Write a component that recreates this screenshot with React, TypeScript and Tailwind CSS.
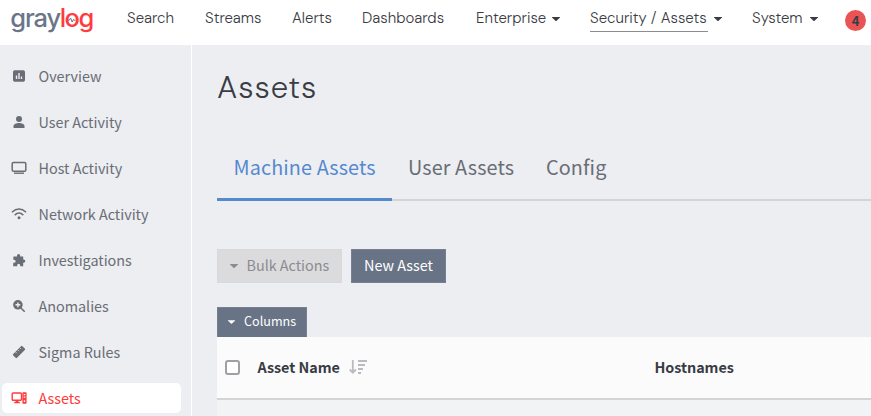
import type { ReactNode } from "react";

const sans = "font-['Source_Sans_Pro','Noto_Sans_CJK_SC',sans-serif]";
const display = "font-['DM_Sans','Inter',sans-serif]";

function Caret({ className = "" }: { className?: string }) {
  return (
    <svg viewBox="0 0 8 4" className={`block h-1 w-2 shrink-0 fill-current ${className}`}>
      <path d="M0 0H8V.6L4.600 3.800Q4 4.200 3.400 3.800L0 .6Z" />
    </svg>
  );
}

function Logo() {
  return (
    <svg viewBox="0 0 84 36" className="h-9 w-[84px] shrink-0 overflow-visible font-['Inter',sans-serif]" fontSize="25.500" fontWeight="500">
      <text x="-0.800" y="22" textLength="51" fill="#6b7588">gray</text>
      <text x="48.700" y="22" textLength="34.500" fill="#ff3b3f">log</text>
      <path d="M56.300 15.200h2l1.300-2.200 1.600 4 1.300-2.700.6.900h1.400" fill="none" stroke="#6b7588" strokeWidth="1" />
    </svg>
  );
}

function NavItem({ label, box, caret, active }: { label: string; box: string; caret?: boolean; active?: boolean }) {
  return (
    <div className="flex items-center">
      <span className={`${box} block h-[28px] whitespace-nowrap border-b pt-[4px] leading-[20px] ${active ? "border-[#8b8d92]" : "border-transparent"}`}>
        {label}
      </span>
      {caret && <Caret className="ml-[6px] mt-[2px]" />}
    </div>
  );
}

const icons: Record<string, ReactNode> = {
  overview: (
    <path fillRule="evenodd" d="M3.600 2.300h8.800a1.600 1.600 0 0 1 1.600 1.600v8.200a1.600 1.600 0 0 1-1.600 1.600H3.600A1.600 1.600 0 0 1 2 12.100V3.900a1.600 1.600 0 0 1 1.600-1.600ZM4.800 7.500v3.500h1.400V7.500ZM7.300 5v6h1.400V5ZM9.800 8.500V11h1.400V8.500Z" />
  ),
  user: (
    <>
      <circle cx="8" cy="5" r="3" />
      <path d="M2.500 14v-1.800C2.500 10.200 5.500 9 8 9s5.500 1.200 5.500 3.200V14Z" />
    </>
  ),
  host: (
    <>
      <rect x="1.200" y="2.500" width="13.600" height="8.800" rx="1.200" fill="none" stroke="currentColor" strokeWidth="1.500" />
      <path d="M3 12.500h10v1.400H3Z" />
    </>
  ),
  network: (
    <>
      <path d="M.9 6.300Q8-.2 15.100 6.300M3.700 9.100Q8 5 12.300 9.100" fill="none" stroke="currentColor" strokeWidth="1.500" />
      <circle cx="8" cy="11.800" r="1.500" />
    </>
  ),
  puzzle: (
    <path d="M2.500 4.500H6V3.600a1.600 1.600 0 0 1 3.200 0v.9h3v3h.5a1.600 1.600 0 0 1 0 3.200h-.5v3.600H9.200v-1a1.500 1.500 0 0 0-3 0v1H2.200v-3.500h.9a1.500 1.500 0 0 0 0-3h-.9Z" />
  ),
  zoom: (
    <>
      <path fillRule="evenodd" d="M6.900 2a4.800 4.800 0 1 0 0 9.600A4.800 4.800 0 0 0 6.900 2ZM6.200 4.400h1.400v1.700h1.700v1.400H7.600v1.700H6.200V7.500H4.500V6.100h1.700Z" />
      <path d="m9.700 9.700 4 4" stroke="currentColor" strokeWidth="1.600" />
    </>
  ),
  ruler: (
    <>
      <rect x="1.500" y="5.300" width="13" height="5.400" rx="1" transform="rotate(-45 8 8)" />
      <path d="m4.300 7.700 1.500 1.500M6.400 5.600l1.500 1.500M8.500 3.500 10 5" stroke="#edeef2" strokeWidth=".7" />
    </>
  ),
  assets: (
    <>
      <rect x="1.200" y="3" width="9.300" height="7.300" rx="1" fill="none" stroke="currentColor" strokeWidth="1.400" />
      <path d="M4.500 10.500h3v1.500h1.300v1.300H3.200V12h1.300Z" />
      <path fillRule="evenodd" d="M12.100 2.300h2.800a.7.700 0 0 1 .7.700v10a.7.700 0 0 1-.7.700h-2.800a.7.700 0 0 1-.7-.7V3a.7.700 0 0 1 .7-.7ZM12.700 4v1.200h1.600V4ZM12.700 6.500v1.200h1.600V6.500ZM13.500 10.200a.8.800 0 1 0 .01 0Z" />
    </>
  ),
};

const sideItems = [
  { icon: "overview", label: "Overview" },
  { icon: "user", label: "User Activity" },
  { icon: "host", label: "Host Activity" },
  { icon: "network", label: "Network Activity" },
  { icon: "puzzle", label: "Investigations" },
  { icon: "zoom", label: "Anomalies" },
  { icon: "ruler", label: "Sigma Rules" },
  { icon: "assets", label: "Assets", active: true },
];

export default function App() {
  return (
    <div className={`flex h-[416px] w-[871px] flex-col overflow-hidden bg-[#edeef2] ${sans}`}>
      <header className={`flex h-[45px] shrink-0 bg-white pl-[11px] text-[15px] font-light text-[#3a3c44] ${display}`}>
        <div className="w-[116px] pt-[5px]"><Logo /></div>
        <nav className="flex h-[36px] items-center">
          <NavItem label="Search" box="mr-[30px] w-[48px]" />
          <NavItem label="Streams" box="mr-[30px] w-[57px]" />
          <NavItem label="Alerts" box="mr-[30px] w-[40px]" />
          <NavItem label="Dashboards" box="w-[84px]" />
          <div className="w-[30px]" />
          <NavItem label="Enterprise" box="w-[70px]" caret />
          <div className="w-[30px]" />
          <NavItem label="Security / Assets" box="w-[118px]" caret active />
          <div className="w-[30px]" />
          <NavItem label="System" box="w-[52px]" caret />
        </nav>
        <div className="ml-[27px] mt-[10px] flex size-[21px] items-center justify-center rounded-full bg-[#eb5454] pb-px font-['Noto_Sans_CJK_SC',sans-serif] text-[13px] leading-none font-bold text-[#3a3c44]">4</div>
      </header>

      <div className="flex min-h-0 flex-1">
        <aside className="w-[192px] shrink-0 border-r border-white pl-[2px] pt-[16px]">
          {sideItems.map((item) => (
            <div
              key={item.label}
              className={`mb-[16px] flex h-[30px] w-[179px] items-center rounded-[5px] pl-[9px] text-[14.400px] leading-[20px] tracking-[-0.020px] ${item.active ? "bg-white text-[#ff3b3b]" : "text-[#696d75]"}`}
            >
              <svg viewBox="0 0 16 16" className="size-4 shrink-0 fill-current">{icons[item.icon]}</svg>
              <span className="ml-[11.500px] whitespace-nowrap">{item.label}</span>
            </div>
          ))}
        </aside>

        <main className="flex min-w-0 flex-1 flex-col pl-[25px]">
          <h1 className={`mt-[23px] h-[39px] text-[31px] leading-[40px] font-light tracking-[0.900px] text-[#3a3c44] ${display}`}>Assets</h1>
          <div className="mt-[35px] flex h-[59px] shrink-0 items-stretch text-[19.800px] leading-[28px] tracking-[0.120px] text-[#696d75] shadow-[inset_0_-2px_0_#d3d4d7]">
            <div className="w-[175px] border-b-[3px] border-[#5589cf] pl-[16.500px] pt-[11px] whitespace-nowrap text-[#5589cf]">Machine Assets</div>
            <div className="w-[138px] pl-[16px] pt-[11px] whitespace-nowrap">User Assets</div>
            <div className="pl-[16px] pt-[11px]">Config</div>
          </div>
          <div className="mt-[48px] flex gap-[9px] text-[14.400px] leading-[20px] tracking-[-0.030px]">
            <div className="flex h-[34px] w-[125px] items-center border border-[#d8d9db] bg-[#dbdbdd] pb-[2px] pl-[12px] text-[#8b8c8f]">
              <Caret className="mt-px" />
              <span className="ml-[8.500px] whitespace-nowrap">Bulk Actions</span>
            </div>
            <div className="flex h-[34px] w-[95px] items-center justify-center border border-[#778093] bg-[#697386] pb-[2px] whitespace-nowrap text-white">New Asset</div>
          </div>
          <div className="mt-[24px] flex h-[30px] w-[90px] shrink-0 items-center border border-b-0 border-[#778093] bg-[#697386] pb-[3px] pl-[10px] text-[12.600px] leading-[18px] text-white">
            <Caret className="mt-px w-[7px]" />
            <span className="ml-[9px]">Columns</span>
          </div>
          <div className="flex h-[63px] shrink-0 items-center border-b-2 border-[#d3d4d7] bg-[#fbfbfb] text-[14.400px] leading-[20px] font-bold tracking-[-0.050px] text-[#393b44]">
            <span className="ml-[8px] size-[15px] rounded-[3px] border-2 border-[#a0a0a4] bg-white" />
            <span className="ml-[17.500px] w-[91.500px] pb-[2px] whitespace-nowrap">Asset Name</span>
            <svg viewBox="0 0 18 16" className="-mt-px h-4 w-[18px] shrink-0 fill-none stroke-[#babbc1]" strokeWidth="1.800">
              <path d="M3.800 1v12.500M.7 10.500l3.100 3.200 3.100-3.200M9 2h9M9 6h7M9 10h5M9 14h3" />
            </svg>
            <span className="ml-[287.500px] pb-[2px]">Hostnames</span>
          </div>
          <div className="flex-1 bg-[#f2f3f5]" />
        </main>
      </div>
    </div>
  );
}
